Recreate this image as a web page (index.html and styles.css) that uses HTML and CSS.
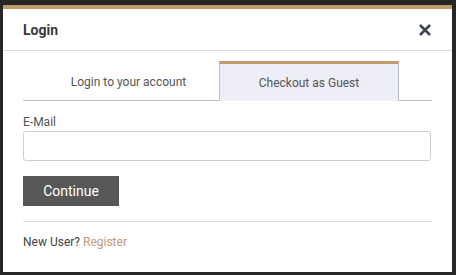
FILE: index.html
```html
<!DOCTYPE html>
<html>
<head>
<meta charset="utf-8">
<link rel="stylesheet" href="styles.css">
</head>
<body>
<div class="dialog">
  <div class="header">
    <span class="title">Login</span>
    <svg class="close" width="12" height="12" viewBox="0 0 12 12"><path d="M1 1 L11 11 M11 1 L1 11" stroke="#3f4651" stroke-width="2.6" stroke-linecap="butt"/></svg>
  </div>
  <div class="body">
    <div class="tabs">
      <div class="tab first">Login to your account</div>
      <div class="tab active">Checkout as Guest</div>
    </div>
    <label class="label">E-Mail</label>
    <input class="input" type="text">
    <button class="btn">Continue</button>
    <div class="sep"></div>
    <div class="foot">New User? <a class="link">Register</a></div>
  </div>
</div>
</body>
</html>
```

FILE: styles.css
```css
html, body { margin: 0; padding: 0; }
body {
  background: #262626;
  width: 456px;
  height: 275px;
  font-family: Roboto, "Liberation Sans", sans-serif;
  padding: 5px 4px 3px 3px;
  box-sizing: border-box;
}
.dialog {
  background: #fff;
  border-top: 4px solid #c49a6c;
  height: 263px;
  display: flex;
  flex-direction: column;
}
.header {
  height: 41px;
  border-bottom: 1px solid #dddddd;
  display: flex;
  align-items: center;
  justify-content: space-between;
  padding: 0 21px 0 20px;
}
.title { font-size: 14px; font-weight: 700; color: #3a3a3a; }
.close { display: block; }
.body { padding: 10px 20px 0 20px; display: flex; flex-direction: column; }
.tabs {
  display: flex;
  border-bottom: 1px solid #b9c0cc;
  height: 39px;
}
.tab {
  width: 196px;
  display: flex;
  align-items: center;
  justify-content: center;
  font-size: 12px;
  color: #555;
  box-sizing: border-box;
  padding-top: 2px;
}
.tab.first { padding-left: 15px; }
.tab.active {
  width: 180px;
  background: #edeef7;
  border-top: 3px solid #c49a6c;
  border-left: 1px solid #b9c0cc;
  border-right: 1px solid #b9c0cc;
  margin-bottom: -1px;
  padding-top: 0;
  color: #555;
}
.label { font-size: 12px; color: #555; margin-top: 13px; height: 16px; line-height: 16px; margin-bottom: 1px; }
.input {
  height: 30px;
  box-sizing: border-box;
  border: 1px solid #cfcfcf;
  border-radius: 3px;
  width: 408px;
  margin: 0;
  padding: 0 8px;
}
.btn {
  margin-top: 15px;
  width: 96px;
  height: 30px;
  background: #575757;
  color: #fff;
  border: 0;
  font-family: Roboto, "Liberation Sans", sans-serif;
  font-size: 14px;
  font-weight: 400;
  padding: 0;
}
.sep { margin-top: 15px; border-top: 1px solid #dddddd; width: 409px; }
.foot { margin-top: 12px; font-size: 12px; color: #444; line-height: 16px; }
.link { color: #c49a7a; }
```
